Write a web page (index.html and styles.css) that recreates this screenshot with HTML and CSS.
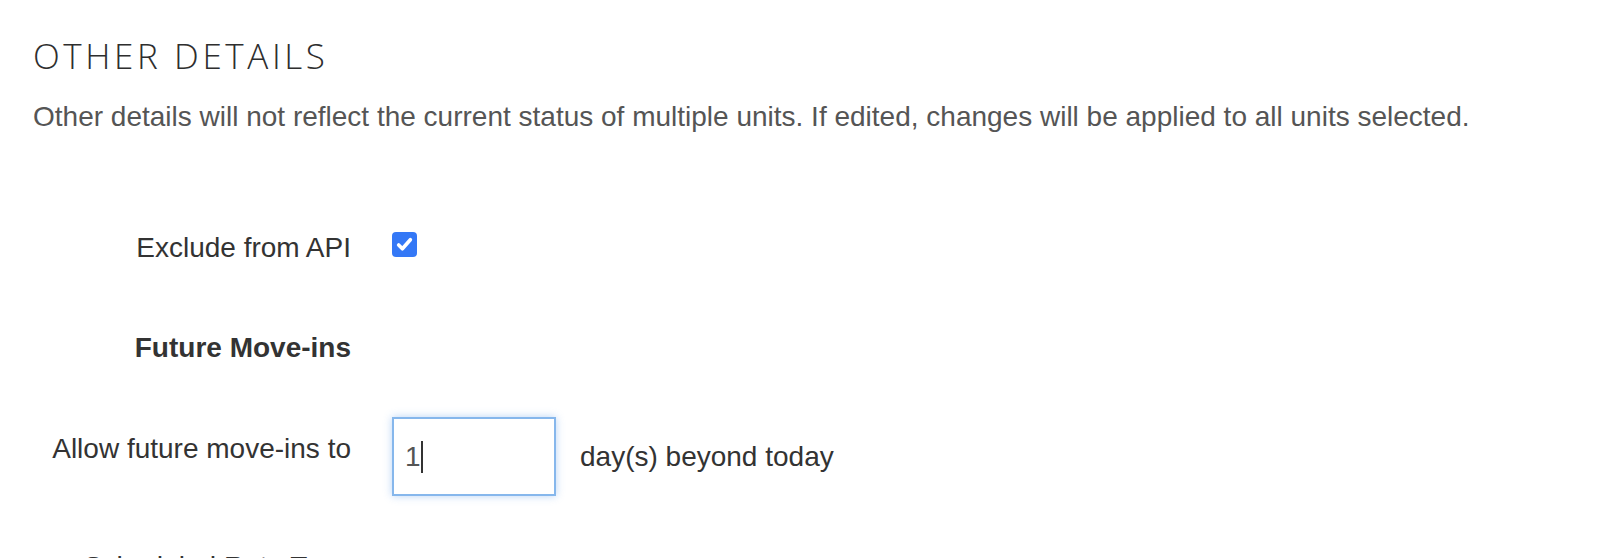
FILE: index.html
```html
<!DOCTYPE html>
<html lang="en">

<head>
    <meta charset="UTF-8">
    <meta name="viewport" content="width=device-width, initial-scale=1.0">
    <title>Other details</title>
    <link rel="stylesheet" href="styles.css">
</head>

<body>
    <div class="panel">
        <h2 class="title">OTHER DETAILS</h2>
        <p class="note">Other details will not reflect the current status of multiple units. If edited, changes will be applied to all units selected.</p>

        <div class="row first">
            <label class="label" for="api">Exclude from API</label>
            <span class="check" id="api">
                <svg width="17" height="15" viewBox="0 0 16 14"><path d="M2.5 7.5 L6 11 L13.5 2.5" fill="none" stroke="#fff" stroke-width="3.4" stroke-linecap="round" stroke-linejoin="round"/></svg>
            </span>
        </div>

        <div class="row">
            <span class="label bold">Future Move-ins</span>
        </div>

        <div class="row days">
            <label class="label pad" for="days">Allow future move-ins to</label>
            <span class="field">
                <input class="input" id="days" type="text" value="1">
                <span class="caret"></span>
            </span>
            <span class="suffix">day(s) beyond today</span>
        </div>

        <div class="row days-next">
            <span class="label">Scheduled Rate Type</span>
        </div>
    </div>
</body>

</html>
```

FILE: styles.css
```css
* {
    margin: 0;
    padding: 0;
    box-sizing: border-box;
}

body {
    font-family: "Liberation Sans", Arial, sans-serif;
    color: #333;
    background: #fff;
    overflow: hidden;
}

.panel {
    padding: 36px 0 0 33px;
}

.title {
    font-family: "Open Sans", sans-serif;
    font-weight: 300;
    font-size: 35px;
    line-height: 40px;
    letter-spacing: 3.6px;
    color: #2e2e2e;
}

.note {
    margin-top: 25px;
    font-size: 28px;
    line-height: 32px;
    color: #555;
}

.row {
    display: flex;
    align-items: flex-start;
    margin-top: 68px;
}

.row.first {
    margin-top: 99px;
}

.row.days {
    margin-top: 53px;
}

.row.days-next {
    margin-top: 55px;
}

.label {
    width: 318px;
    margin-right: 41px;
    text-align: right;
    font-size: 28px;
    line-height: 32px;
    color: #333;
    flex-shrink: 0;
}

.label.bold {
    font-weight: bold;
}

.label.pad {
    padding-top: 16px;
}

.check {
    width: 25px;
    height: 25px;
    border-radius: 4px;
    background: #3478f6;
    display: flex;
    align-items: center;
    justify-content: center;
}

.field {
    position: relative;
    display: block;
}

.input {
    width: 164px;
    height: 79px;
    padding-left: 11px;
    border: 2px solid #86b7ec;
    box-shadow: 0 0 8px rgba(100, 160, 235, .45);
    font-family: "Liberation Sans", Arial, sans-serif;
    font-size: 28px;
    color: #555;
    outline: none;
    caret-color: transparent;
}

/* fake text cursor, the screenshot does not blink */
.caret {
    position: absolute;
    left: 29px;
    top: 24px;
    width: 2px;
    height: 32px;
    background: #333;
}

.suffix {
    align-self: center;
    margin-left: 24px;
    font-size: 28px;
    line-height: 32px;
    color: #333;
}
```
